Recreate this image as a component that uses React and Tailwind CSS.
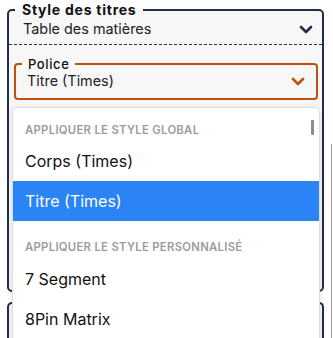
import React from "react";

const Chevron = ({ className }) => (
  <svg width="14" height="9" viewBox="0 0 14 9" fill="none" className={className}>
    <path d="M2 2 L7 7 L12 2" stroke="currentColor" strokeWidth="2.6" strokeLinecap="round" strokeLinejoin="round" />
  </svg>
);

const globalFonts = ["Corps (Times)", "Titre (Times)"];
const customFonts = ["7 Segment", "8Pin Matrix"];

const App = () => {
  return (
    <div className="relative w-[333px] h-[338px] overflow-hidden bg-white font-['Inter','Noto_Sans',sans-serif] text-[#111]">
      <div className="pl-[7px] pr-[9px] pt-[3px]">
        {/* Style des titres */}
        <fieldset className="border-2 border-[#1d3048] rounded-[5px] bg-[#f7f7f7]">
          <legend className="ml-[6px] px-[7px] text-[14px] leading-[14px] font-bold tracking-[0.75px] text-[#111]">
            Style des titres
          </legend>
          <div className="flex items-center justify-between pl-[14px] pr-[9px] pt-[2px] pb-[5px] border-b border-dashed border-[#1d3048]">
            <span className="text-[14.4px] leading-[20px] text-[#222]">Table des matières</span>
            <Chevron className="text-[#1d3048]" />
          </div>

          <div className="pt-[12px] pl-[5px] pr-[4px]">
            <fieldset className="border-2 border-[#bb5212] rounded-[4px]">
              <legend className="ml-[6px] px-[6px] text-[13px] leading-[14px] font-medium tracking-[0.6px] text-[#111]">
                Police
              </legend>
              <div className="flex items-center justify-between pl-[11px] pr-[11px] pt-[0px] pb-[7px]">
                <span className="text-[14.4px] leading-[20px] text-[#222]">Titre (Times)</span>
                <Chevron className="text-[#bb5212]" />
              </div>
            </fieldset>
          </div>

          <div className="h-[190px]"></div>
        </fieldset>

        <div className="mt-[10px] h-[40px] border-2 border-b-0 border-[#1d3048] rounded-t-[5px] bg-[#f7f7f7]"></div>
      </div>

      {/* font menu */}
      <div className="absolute left-[12px] top-[107px] w-[308px] h-[260px] bg-white border border-[#dedede] rounded-[5px] shadow-[0_2px_6px_rgba(0,0,0,0.12)]">
        <div className="absolute right-[5px] top-[12px] w-[3px] h-[15px] rounded-[1px] bg-[#8c8c8c]"></div>
        <div className="px-3 pt-[15px] pb-[4px] text-[11.3px] leading-[14px] font-semibold tracking-[0.3px] text-[#9c9c9c]">
          APPLIQUER LE STYLE GLOBAL
        </div>
        {globalFonts.map((f, i) => (
          <div
            key={f}
            className={
              i === 1
                ? "h-[40px] flex items-center px-3 text-[16px] text-white bg-[#2b84f6]"
                : "h-[40px] flex items-center px-3 text-[16px] text-[#111]"
            }
          >
            {f}
          </div>
        ))}
        <div className="px-3 pt-[19px] pb-[5px] text-[11.3px] leading-[14px] font-semibold tracking-[0.3px] text-[#9c9c9c]">
          APPLIQUER LE STYLE PERSONNALISÉ
        </div>
        {customFonts.map((f) => (
          <div key={f} className="h-[40px] flex items-center px-3 text-[16px] text-[#111]">
            {f}
          </div>
        ))}
      </div>

      <div className="absolute left-[331px] top-[144px] bottom-0 w-[1px] bg-[#9a98a8]"></div>
    </div>
  );
};

export default App;
